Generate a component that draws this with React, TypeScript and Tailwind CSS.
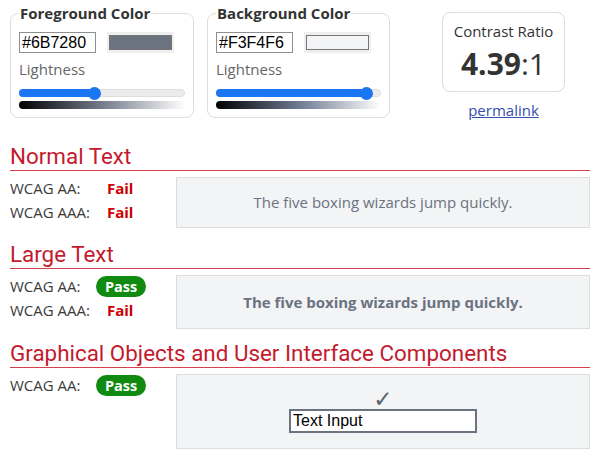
import React from 'react';

const sans = "font-['Open_Sans',sans-serif]";
const roboto = "font-['Roboto',sans-serif]";

interface ColorPickerProps {
  label: string;
  hex: string;
  lightness: number;
  gradient: string;
  className?: string;
}

function ColorPicker({ label, hex, lightness, gradient, className }: ColorPickerProps) {
  return (
    <fieldset className={`mt-[3px] rounded-lg border border-[#ddd] px-[8px] pb-[8px] ${className ?? ''}`}>
      <legend className="px-[1px] text-[15px] leading-[20px] font-bold text-[#333]">{label}</legend>
      <div className="mt-[9px] flex items-center">
        <input
          readOnly
          value={hex}
          className="h-[21px] w-[77px] border border-[#8f8f8f] bg-white px-[2px] font-['Liberation_Sans',sans-serif] text-[16px] leading-[19px] text-black outline-none"
        />
        <div className="ml-[11px] h-[21px] w-[67px] bg-[#efefef] px-[2px] py-[3px]">
          <div className="h-full w-full border border-[#767676]" style={{ backgroundColor: hex }} />
        </div>
      </div>
      <div className="mt-[6px] text-[15px] leading-[20px] text-[#666]">Lightness</div>
      <div className="relative mt-[10px] h-[8px] w-full rounded-full border border-[#ddd] bg-[#ececec]">
        <div
          className="absolute top-[-1px] left-[-1px] h-[8px] rounded-full bg-[#1a76f2]"
          style={{ width: `calc(${lightness}% - ${lightness * 0.13}px + 6px)` }}
        />
        <div
          className="absolute top-[-3.5px] h-[13px] w-[13px] rounded-full bg-[#1a76f2]"
          style={{ left: `calc(${lightness}% - ${lightness * 0.13}px - 1px)` }}
        />
      </div>
      <div className="mt-[4px] h-[8px] w-full rounded-sm" style={{ background: gradient }} />
    </fieldset>
  );
}

interface ResultRow {
  level: string;
  pass: boolean;
}

function Verdict({ pass }: { pass: boolean }) {
  return pass ? (
    <span className="inline-block rounded-full bg-[#118a11] px-[9px] text-[14.5px] leading-[21px] font-bold text-white">Pass</span>
  ) : (
    <span className="inline-block px-[11px] text-[15px] leading-[21px] font-bold text-[#cc0000]">Fail</span>
  );
}

function Section({
  title,
  rows,
  children,
  boxClass,
  className,
}: {
  title: string;
  rows: ResultRow[];
  children: React.ReactNode;
  boxClass: string;
  className?: string;
}) {
  return (
    <section className={className}>
      <h2 className={`${roboto} border-b border-[#d9404e] pb-[1px] text-[22.4px] leading-[26px] text-[#c41a2e]`}>{title}</h2>
      <div className="mt-[6px] flex">
        <div className="-mt-[1px] w-[166px] shrink-0">
          {rows.map((r) => (
            <div key={r.level} className="flex h-[24px] items-center text-[15px] text-[#3a3a3a]">
              <span className="w-[86px]">WCAG {r.level}:</span>
              <Verdict pass={r.pass} />
            </div>
          ))}
        </div>
        <div className={`flex-1 border border-[#ddd] bg-[#F3F4F6] ${boxClass}`}>{children}</div>
      </div>
    </section>
  );
}

export default function App() {
  return (
    <div className={`${sans} h-[458px] w-[600px] overflow-hidden bg-white pr-[10px] pl-[10px] text-[#333]`}>
      <div className="flex items-start">
        <ColorPicker
          label="Foreground Color"
          hex="#6B7280"
          lightness={46}
          gradient="linear-gradient(to right, hsl(220,9%,0%), hsl(220,9%,50%), hsl(220,9%,100%))"
          className="w-[184px]"
        />
        <ColorPicker
          label="Background Color"
          hex="#F3F4F6"
          lightness={96}
          gradient="linear-gradient(to right, hsl(220,14%,0%), hsl(220,14%,50%), hsl(220,14%,100%))"
          className="ml-[13px] w-[183px]"
        />
        <div className="mt-[12px] ml-[52px] flex flex-col items-center">
          <div className="flex h-[80px] w-[123px] flex-col items-center rounded-lg border border-[#ddd] pt-[8px]">
            <div className="text-[15px] leading-[20px] text-[#333]">Contrast Ratio</div>
            <div className="mt-[4px] text-[30px] leading-[37px] text-[#333]">
              <span className="font-bold">4.39</span>:1
            </div>
          </div>
          <a href="#" className="mt-[8px] text-[15px] leading-[20px] text-[#3450b0] underline">
            permalink
          </a>
        </div>
      </div>

      <Section
        title="Normal Text"
        className="mt-[23px]"
        rows={[
          { level: 'AA', pass: false },
          { level: 'AAA', pass: false },
        ]}
        boxClass="flex h-[51px] items-center justify-center"
      >
        <span className="text-[15px] text-[#6B7280]">The five boxing wizards jump quickly.</span>
      </Section>

      <Section
        title="Large Text"
        className="mt-[13px]"
        rows={[
          { level: 'AA', pass: true },
          { level: 'AAA', pass: false },
        ]}
        boxClass="flex h-[54px] items-center justify-center"
      >
        <span className="text-[15px] font-bold text-[#6B7280]">The five boxing wizards jump quickly.</span>
      </Section>

      <Section
        title="Graphical Objects and User Interface Components"
        className="mt-[11px]"
        rows={[{ level: 'AA', pass: true }]}
        boxClass="flex h-[75px] flex-col items-center justify-center"
      >
        <span className="font-['DejaVu_Sans',sans-serif] text-[23px] leading-[18px] text-[#5b6270]">✓</span>
        <input
          readOnly
          value="Text Input"
          className="mt-[1px] h-[24px] w-[188px] border-2 border-[#6B7280] bg-white px-[2px] font-['Liberation_Sans',sans-serif] text-[16px] text-black outline-none"
        />
      </Section>
    </div>
  );
}
